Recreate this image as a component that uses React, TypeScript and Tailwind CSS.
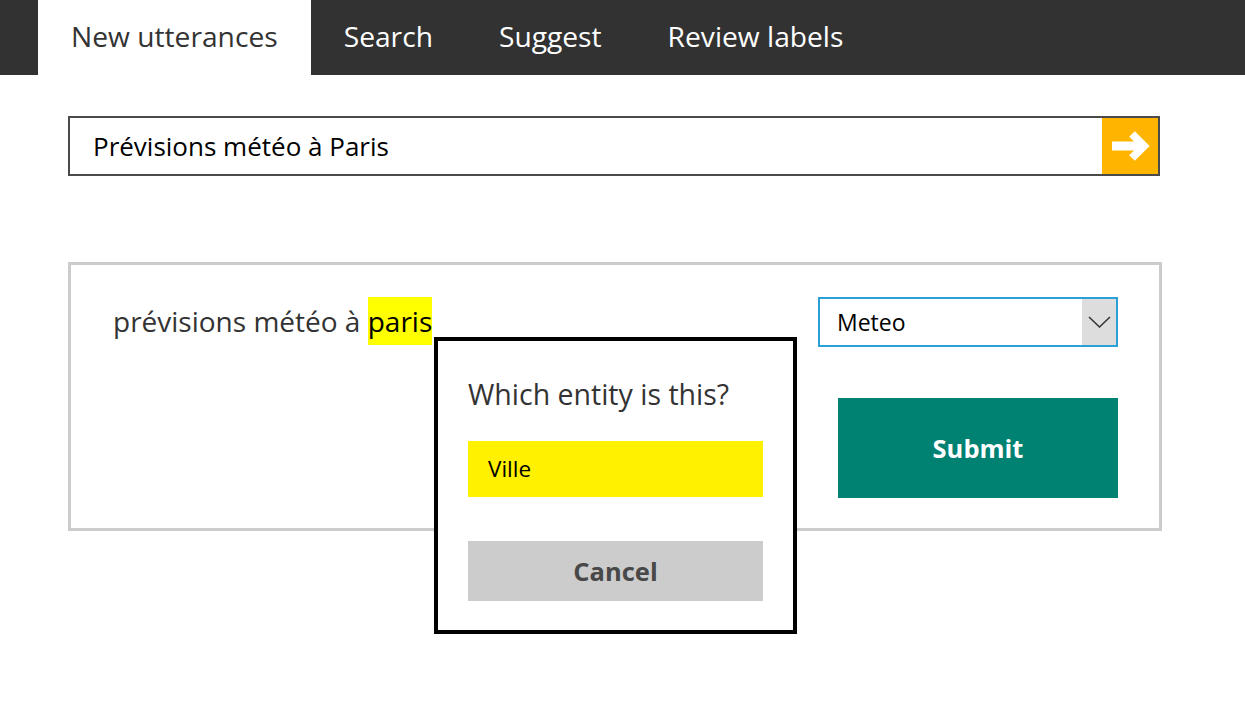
import { useState } from "react";

const tabs = ["New utterances", "Search", "Suggest", "Review labels"];

function ArrowIcon() {
  return (
    <svg width="40" height="32" viewBox="0 0 40 32" fill="none">
      <path d="M2 16 H33" stroke="white" strokeWidth="9" />
      <path d="M22 4 L34 16 L22 28" stroke="white" strokeWidth="8" strokeLinejoin="miter" />
    </svg>
  );
}

function ChevronDown() {
  return (
    <svg width="23" height="12" viewBox="0 0 23 12" fill="none">
      <path d="M1 1 L11.5 11 L22 1" stroke="#333" strokeWidth="1.5" />
    </svg>
  );
}

export default function App() {
  const [active] = useState(0);
  const [query] = useState("Prévisions météo à Paris");

  return (
    <div className="min-h-screen bg-white font-['Open_Sans',sans-serif] text-[#333]">
      <nav className="flex h-[75px] bg-[#323232] pl-[38px]">
        {tabs.map((tab, i) => (
          <div
            key={tab}
            className={
              i === active
                ? "flex items-center bg-white px-[33px] pb-[3px] text-[28.2px] text-[#333]"
                : "flex items-center px-[33px] pb-[3px] text-[28.2px] text-white"
            }
          >
            {tab}
          </div>
        ))}
      </nav>

      <div className="w-[1094px] ml-[68px]">
        <div className="mt-[41px] flex h-[60px] w-[1092px] border-2 border-[#4a4a4a]">
          <div className="flex flex-1 items-center pl-[23px] text-[26px] text-black">
            {query}
          </div>
          <button className="flex w-[56px] items-center justify-center bg-[#ffb400]">
            <ArrowIcon />
          </button>
        </div>

        <div className="relative mt-[86px] flex h-[269px] justify-between border-[3px] border-[#cccccc] pl-[42px] pr-[41px] pt-[32px]">
          <div className="flex h-[48px] items-center text-[28px] text-[#333]">
            <span>prévisions météo à&nbsp;</span>
            <span className="flex h-[48px] items-center bg-[#ffff00] text-black">paris</span>
          </div>

          <div className="flex flex-col items-end gap-[51px]">
            <div className="flex h-[50px] w-[300px] border-2 border-[#2a9fd8]">
              <div className="flex flex-1 items-center pl-[17px] text-[23px] text-black">Meteo</div>
              <div className="flex w-[34px] items-center justify-center bg-[#dddddd]">
                <ChevronDown />
              </div>
            </div>
            <button className="flex h-[100px] w-[280px] items-center justify-center bg-[#008272] text-[25.5px] font-bold text-white">
              Submit
            </button>
          </div>

          <div className="absolute left-[363px] top-[72px] flex h-[297px] w-[363px] flex-col border-4 border-black bg-white px-[30px] pt-[33px]">
            <div className="text-[28.5px] leading-[40px] text-[#333]">Which entity is this?</div>
            <button className="mt-[27px] flex h-[56px] w-full items-center bg-[#fff100] pl-[20px] text-[22.5px] text-black">
              Ville
            </button>
            <button className="mt-[44px] flex h-[60px] w-full items-center justify-center bg-[#cccccc] text-[25.5px] font-bold text-[#484848]">
              Cancel
            </button>
          </div>
        </div>
      </div>
    </div>
  );
}
